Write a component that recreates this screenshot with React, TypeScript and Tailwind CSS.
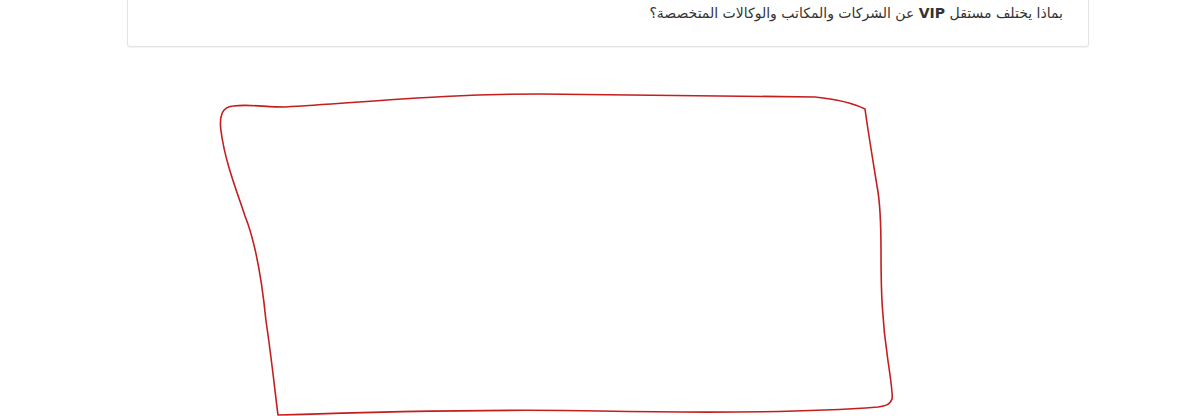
export default function App() {
  return (
    <div className="w-[1200px] h-[416px] bg-white overflow-hidden relative" style={{ fontFamily: '"DejaVu Sans", "Noto Sans", sans-serif' }}>
      <div className="ml-[127px] w-[962px] h-[67px] -mt-[20px] border border-[#e3e3e3] rounded-[3px] shadow-[0_1px_1px_rgba(0,0,0,0.05)] bg-white flex items-end justify-end pr-[25px] pb-[23px]">
        <p className="text-[14px] leading-[20px] text-[#333]" dir="rtl">
          بماذا يختلف مستقل <span className="font-bold">VIP</span> عن الشركات والمكاتب والوكالات المتخصصة؟
        </p>
      </div>
      <svg width="1200" height="370" viewBox="0 46 1200 370" className="block">
        <path
          d="M 233 105 C 250 103, 265 106, 285 106 C 380 100, 450 93, 540 93 L 815 96 C 835 98, 855 103, 865 108 C 868 130, 873 160, 877 185 C 880 200, 881 220, 881 250 C 881 290, 882 320, 888 360 C 891 380, 893 395, 892 398 C 890 404, 885 405, 878 406 C 800 412, 700 412, 600 410 C 500 408, 400 410, 278 414 C 276 400, 272 360, 266 320 C 262 280, 255 240, 245 215 C 235 185, 225 160, 221 130 C 219 115, 222 106, 233 105 Z"
          fill="none"
          stroke="#c41e1e"
          strokeWidth="1.6"
          strokeLinejoin="round"
        />
      </svg>
    </div>
  );
}
